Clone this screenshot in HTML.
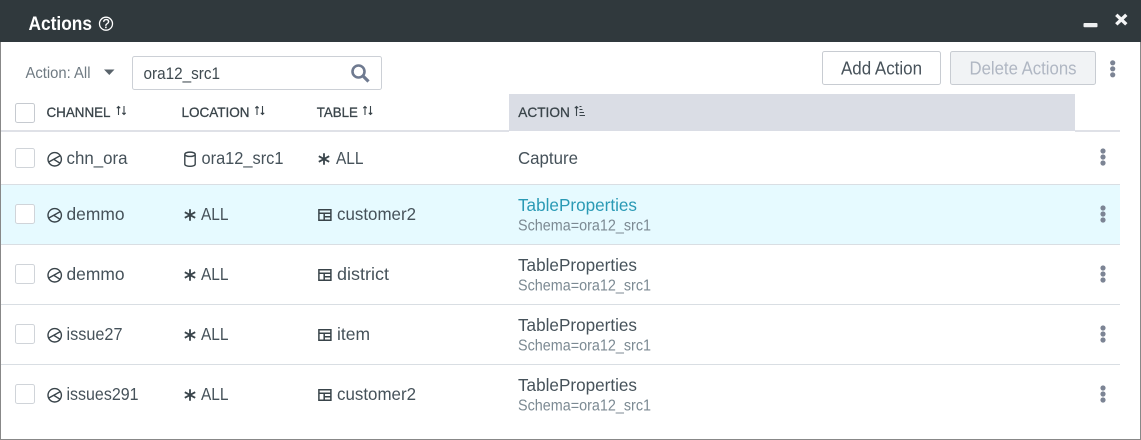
<!DOCTYPE html>
<html>
<head>
<meta charset="utf-8">
<title>Actions</title>
<style>
html,body{margin:0;padding:0;background:#fff}
svg{display:block}
text{font-family:"Liberation Sans",sans-serif;font-size:17.5px;fill:#46525a}
.h{font-size:14px;fill:#3a444a;stroke:#3a444a;stroke-width:.3}
.s{font-size:15.5px;fill:#7c8a93}
.i{fill:none;stroke:#39444a;stroke-width:1.4}
</style>
</head>
<body>
<svg width="1141" height="440" viewBox="0 0 1141 440" xmlns="http://www.w3.org/2000/svg">
<defs>
<g id="ch" class="i"><circle cx="54.700" cy="159.300" r="6.700"/><path d="M60.500 155.500L48.800 162M53.500 159.200L60.300 163.400"/></g>
<g id="st" fill="none" stroke="#39444a" stroke-width="1.800"><path d="M190 153.300v11.400M184.800 156.200l10.400 5.600M184.800 161.800l10.400-5.600"/></g>
<g id="tb" fill="none" stroke="#39444a" stroke-width="1.500"><path d="M318.900 153.700h12v10.600h-12zM318.900 157.200h12M324.200 157.200v7.100M324.200 160.800h6.700"/></g>
<g id="dots" fill="#7c8494"><circle cx="1103" cy="151" r="2.600"/><circle cx="1103" cy="157" r="2.600"/><circle cx="1103" cy="163" r="2.600"/></g>
<g id="sort" fill="none" stroke="#3a444a" stroke-width="1.100"><path d="M118.500 115V106.500M116.800 108.200l1.700-1.700 1.700 1.700M124 106v8.500M122.300 112.800l1.700 1.700 1.700-1.700"/></g>
</defs>

<rect width="1141" height="440" fill="#fff"/>
<rect x="0" y="0" width="1141" height="42" fill="#30393d"/>
<rect x="0" y="42" width="1" height="398" fill="#888"/>
<rect x="1140" y="42" width="1" height="398" fill="#888"/>
<rect x="0" y="439" width="1141" height="1" fill="#888"/>

<text x="28.500" y="30" style="font-size:19px;font-weight:700;fill:#fff" textLength="63.500" lengthAdjust="spacingAndGlyphs">Actions</text>
<circle cx="106" cy="23.700" r="6.500" fill="none" stroke="#fff" stroke-width="1.300"/>
<text x="102.600" y="28.200" style="font-size:12.500px;font-weight:400;fill:#fff;stroke:#fff;stroke-width:.3">?</text>
<rect x="1083.500" y="23" width="14" height="4.200" rx="1" fill="#eef0f1"/>
<path d="M1116.300 14.800L1126.300 24.300M1126.300 14.800L1116.300 24.300" stroke="#f4f5f6" stroke-width="3.400" fill="none"/>

<text x="25.500" y="78" textLength="65" lengthAdjust="spacingAndGlyphs" style="font-size:16px;fill:#6f7a82">Action: All</text>
<path d="M104 69.500h10.500l-5.200 5.500z" fill="#59636b"/>
<rect x="132.500" y="56.500" width="249" height="33" rx="2" fill="#fff" stroke="#ccd0d6"/>
<text x="143.500" y="79" textLength="76.500" lengthAdjust="spacingAndGlyphs" style="fill:#3f4a50;font-size:16.500px">ora12_src1</text>
<circle cx="358.500" cy="71.500" r="6" fill="none" stroke="#6f7a90" stroke-width="2.600"/>
<path d="M363 76l5.500 5.500" stroke="#6f7a90" stroke-width="3.200" fill="none"/>

<rect x="822.500" y="51.500" width="118" height="33" rx="2" fill="#fff" stroke="#c8ccd2"/>
<text x="841" y="74.500" textLength="81" lengthAdjust="spacingAndGlyphs" style="fill:#47525a;font-size:18px">Add Action</text>
<rect x="950.500" y="51.500" width="145" height="33" rx="2" fill="#f1f3f5" stroke="#c8ccd2"/>
<text x="969.500" y="74.500" textLength="107" lengthAdjust="spacingAndGlyphs" style="fill:#b0b7c3;font-size:18px">Delete Actions</text>
<use href="#dots" x="9.700" y="-88.200"/>

<rect x="509" y="94" width="566" height="37" fill="#dadde5"/>
<rect x="1" y="130" width="508" height="2" fill="#dfe1e7"/>
<rect x="1075" y="130" width="45" height="2" fill="#dfe1e7"/>
<rect x="15.500" y="103.500" width="19" height="19" rx="2" fill="#fff" stroke="#c6cad0"/>
<text class="h" x="46.500" y="117" textLength="64" lengthAdjust="spacingAndGlyphs">CHANNEL</text>
<use href="#sort"/>
<text class="h" x="181.500" y="117" textLength="68" lengthAdjust="spacingAndGlyphs">LOCATION</text>
<use href="#sort" x="138.500"/>
<text class="h" x="316.800" y="117" textLength="41" lengthAdjust="spacingAndGlyphs">TABLE</text>
<use href="#sort" x="246.500"/>
<text class="h" x="518.300" y="117" textLength="51.500" lengthAdjust="spacingAndGlyphs">ACTION</text>
<path d="M576.500 116V106.500M574.800 108.200l1.700-1.700 1.700 1.700M579.500 106.500h2M579.500 109.500h3M579.500 112.500h4.500M579.500 115.500h5.500" fill="none" stroke="#3a444a" stroke-width="1.100"/>

<rect x="1" y="185" width="1119" height="59" fill="#e6faff"/>
<rect x="1" y="184" width="1119" height="1" fill="#d9dee3"/>
<rect x="1" y="244" width="1119" height="1" fill="#d9dee3"/>
<rect x="1" y="304" width="1119" height="1" fill="#d9dee3"/>
<rect x="1" y="364" width="1119" height="1" fill="#d9dee3"/>

<!-- Row 1 -->
<rect x="15.500" y="148.500" width="19" height="19" rx="2" fill="#fff" stroke="#d0d4d9"/>
<use href="#ch"/>
<text x="66.500" y="164" textLength="61" lengthAdjust="spacingAndGlyphs">chn_ora</text>
<path d="M184.800 154.300v9.800c0 2.900 10.400 2.900 10.400 0v-9.800M184.800 154.300c0-2.900 10.400-2.900 10.400 0s-10.400 2.900-10.400 0z" class="i"/>
<text x="201.500" y="164" textLength="82" lengthAdjust="spacingAndGlyphs">ora12_src1</text>
<use href="#st" x="134"/>
<text x="336" y="164" textLength="27.500" lengthAdjust="spacingAndGlyphs">ALL</text>
<text x="518" y="164" textLength="60" lengthAdjust="spacingAndGlyphs">Capture</text>
<use href="#dots"/>

<!-- Row 2 -->
<rect x="15.500" y="204.500" width="19" height="19" rx="2" fill="#fff" stroke="#d0d4d9"/>
<use href="#ch" y="56"/>
<text x="66.500" y="220" textLength="58" lengthAdjust="spacingAndGlyphs">demmo</text>
<use href="#st" y="56"/>
<text x="201" y="220" textLength="27.500" lengthAdjust="spacingAndGlyphs">ALL</text>
<use href="#tb" y="56"/>
<text x="337" y="220" textLength="79" lengthAdjust="spacingAndGlyphs">customer2</text>
<text x="518" y="211" textLength="119" lengthAdjust="spacingAndGlyphs" style="fill:#2a9ab5">TableProperties</text>
<text class="s" x="518" y="230.500" textLength="133" lengthAdjust="spacingAndGlyphs">Schema=ora12_src1</text>
<use href="#dots" y="57"/>

<!-- Row 3 -->
<rect x="15.500" y="264.500" width="19" height="19" rx="2" fill="#fff" stroke="#d0d4d9"/>
<use href="#ch" y="116"/>
<text x="66.500" y="280" textLength="58" lengthAdjust="spacingAndGlyphs">demmo</text>
<use href="#st" y="116"/>
<text x="201" y="280" textLength="27.500" lengthAdjust="spacingAndGlyphs">ALL</text>
<use href="#tb" y="116"/>
<text x="337" y="280" textLength="52" lengthAdjust="spacingAndGlyphs">district</text>
<text x="518" y="271" textLength="119" lengthAdjust="spacingAndGlyphs">TableProperties</text>
<text class="s" x="518" y="290.500" textLength="133" lengthAdjust="spacingAndGlyphs">Schema=ora12_src1</text>
<use href="#dots" y="117"/>

<!-- Row 4 -->
<rect x="15.500" y="324.500" width="19" height="19" rx="2" fill="#fff" stroke="#d0d4d9"/>
<use href="#ch" y="176"/>
<text x="66.500" y="340" textLength="56" lengthAdjust="spacingAndGlyphs">issue27</text>
<use href="#st" y="176"/>
<text x="201" y="340" textLength="27.500" lengthAdjust="spacingAndGlyphs">ALL</text>
<use href="#tb" y="176"/>
<text x="337" y="340" textLength="33" lengthAdjust="spacingAndGlyphs">item</text>
<text x="518" y="331" textLength="119" lengthAdjust="spacingAndGlyphs">TableProperties</text>
<text class="s" x="518" y="350.500" textLength="133" lengthAdjust="spacingAndGlyphs">Schema=ora12_src1</text>
<use href="#dots" y="177"/>

<!-- Row 5 -->
<rect x="15.500" y="384.500" width="19" height="19" rx="2" fill="#fff" stroke="#d0d4d9"/>
<use href="#ch" y="236"/>
<text x="66.500" y="400" textLength="72" lengthAdjust="spacingAndGlyphs">issues291</text>
<use href="#st" y="236"/>
<text x="201" y="400" textLength="27.500" lengthAdjust="spacingAndGlyphs">ALL</text>
<use href="#tb" y="236"/>
<text x="337" y="400" textLength="79" lengthAdjust="spacingAndGlyphs">customer2</text>
<text x="518" y="391" textLength="119" lengthAdjust="spacingAndGlyphs">TableProperties</text>
<text class="s" x="518" y="410.500" textLength="133" lengthAdjust="spacingAndGlyphs">Schema=ora12_src1</text>
<use href="#dots" y="237"/>
</svg>
</body>
</html>
